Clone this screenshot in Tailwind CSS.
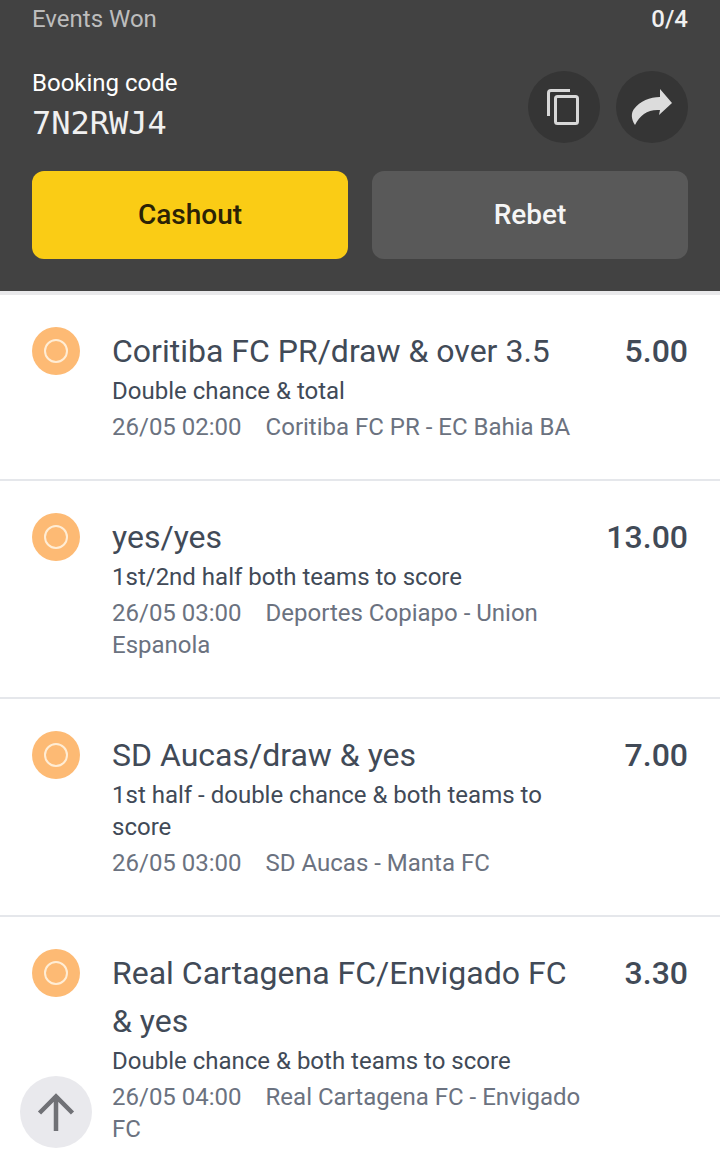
<!DOCTYPE html>
<html>
<head>
<meta charset="utf-8">
<script src="https://cdn.jsdelivr.net/npm/@tailwindcss/browser@4"></script>
</head>
<body class="bg-white font-['Roboto',sans-serif] overflow-hidden">
<div class="relative w-[720px] h-[1175px] overflow-hidden">
  <header class="bg-[#424242] h-[291px] px-8 flex flex-col">
    <div class="flex justify-between items-center h-[38px] text-[24px] leading-[38px]">
      <span class="text-[#bdbdbd]">Events Won</span>
      <span class="text-[#f0f0f0] font-medium">0/4</span>
    </div>
    <div class="flex justify-between mt-[33px] h-[72px]">
      <div class="flex flex-col">
        <span class="text-white text-[24px] leading-[24px]">Booking code</span>
        <span class="text-[#f0f0f0] text-[32px] leading-[40px] mt-2 font-['DejaVu_Sans_Mono',monospace]">7N2RWJ4</span>
      </div>
      <div class="flex gap-4">
        <button class="w-[72px] h-[72px] rounded-full bg-[#353535] flex items-center justify-center">
          <svg width="72" height="72" viewBox="0 0 72 72" fill="none" stroke="#d8d8d8" stroke-width="3"><path d="M20.500 45V22q0-2.500 2.500-2.500H42"/><rect x="27.500" y="25.500" width="22" height="27" rx="2"/></svg>
        </button>
        <button class="w-[72px] h-[72px] rounded-full bg-[#353535] flex items-center justify-center">
          <svg width="72" height="72" viewBox="0 0 72 72" fill="#dcdcdc"><path d="M44 18 56 32 43 44 44 39C32 38 24 44 19 54 15 48 15 42 18 38 24 30 34 26 44 26Z"/></svg>
        </button>
      </div>
    </div>
    <div class="flex gap-6 mt-[28px]">
      <button class="flex-1 h-[88px] rounded-xl bg-[#facc15] text-[#2b2205] text-[28px] font-medium">Cashout</button>
      <button class="flex-1 h-[88px] rounded-xl bg-[#595959] text-[#f5f5f5] text-[28px] font-medium">Rebet</button>
    </div>
  </header>
  <div class="h-1 bg-[#e9e9eb]"></div>
  <main>
    <article class="flex pl-8 pr-8 pt-8 h-[186px] border-b-2 border-[#e5e7eb]">
      <div class="w-12 h-12 rounded-full bg-[#fdba74] flex items-center justify-center shrink-0"><div class="w-6 h-6 rounded-full border-2 border-[#ffedd5]"></div></div>
      <div class="ml-8 w-[472px] min-w-0">
        <h3 class="text-[32px] leading-[48px] text-[#414a57]">Coritiba FC PR/draw &amp; over 3.5</h3>
        <p class="text-[24px] leading-8 text-[#414a57]">Double chance &amp; total</p>
        <p class="text-[24px] leading-8 text-[#6b7280] mt-1"><span class="mr-6">26/05 02:00</span>Coritiba FC PR - EC Bahia BA</p>
      </div>
      <div class="ml-auto text-[32px] leading-[48px] font-medium text-[#414a57]">5.00</div>
    </article>
    <article class="flex pl-8 pr-8 pt-8 h-[218px] border-b-2 border-[#e5e7eb]">
      <div class="w-12 h-12 rounded-full bg-[#fdba74] flex items-center justify-center shrink-0"><div class="w-6 h-6 rounded-full border-2 border-[#ffedd5]"></div></div>
      <div class="ml-8 w-[472px] min-w-0">
        <h3 class="text-[32px] leading-[48px] text-[#414a57]">yes/yes</h3>
        <p class="text-[24px] leading-8 text-[#414a57]">1st/2nd half both teams to score</p>
        <p class="text-[24px] leading-8 text-[#6b7280] mt-1"><span class="mr-6">26/05 03:00</span>Deportes Copiapo - Union Espanola</p>
      </div>
      <div class="ml-auto text-[32px] leading-[48px] font-medium text-[#414a57]">13.00</div>
    </article>
    <article class="flex pl-8 pr-8 pt-8 h-[218px] border-b-2 border-[#e5e7eb]">
      <div class="w-12 h-12 rounded-full bg-[#fdba74] flex items-center justify-center shrink-0"><div class="w-6 h-6 rounded-full border-2 border-[#ffedd5]"></div></div>
      <div class="ml-8 w-[472px] min-w-0">
        <h3 class="text-[32px] leading-[48px] text-[#414a57]">SD Aucas/draw &amp; yes</h3>
        <p class="text-[24px] leading-8 text-[#414a57]">1st half - double chance &amp; both teams to score</p>
        <p class="text-[24px] leading-8 text-[#6b7280] mt-1"><span class="mr-6">26/05 03:00</span>SD Aucas - Manta FC</p>
      </div>
      <div class="ml-auto text-[32px] leading-[48px] font-medium text-[#414a57]">7.00</div>
    </article>
    <article class="flex pl-8 pr-8 pt-8">
      <div class="w-12 h-12 rounded-full bg-[#fdba74] flex items-center justify-center shrink-0"><div class="w-6 h-6 rounded-full border-2 border-[#ffedd5]"></div></div>
      <div class="ml-8 w-[472px] min-w-0">
        <h3 class="text-[32px] leading-[48px] text-[#414a57]">Real Cartagena FC/Envigado FC &amp; yes</h3>
        <p class="text-[24px] leading-8 text-[#414a57]">Double chance &amp; both teams to score</p>
        <p class="text-[24px] leading-8 text-[#6b7280] mt-1"><span class="mr-6">26/05 04:00</span>Real Cartagena FC - Envigado FC</p>
      </div>
      <div class="ml-auto text-[32px] leading-[48px] font-medium text-[#414a57]">3.30</div>
    </article>
  </main>
  <button class="absolute left-5 top-[1076px] w-[72px] h-[72px] rounded-full bg-[#e9e9ed] flex items-center justify-center">
    <svg width="72" height="72" viewBox="0 0 72 72" fill="none" stroke="#707176" stroke-width="4.500"><path d="M36 55V20M19.500 37 36 20.500 52.500 37"/></svg>
  </button>
</div>
</body>
</html>
